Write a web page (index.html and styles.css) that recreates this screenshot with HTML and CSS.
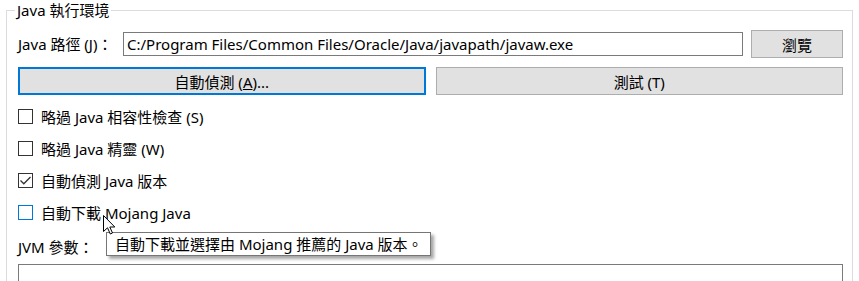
FILE: index.html
```html
<!DOCTYPE html>
<html lang="zh-Hant">
  <head>
    <meta charset="UTF-8" />
    <title>Java 執行環境</title>
    <link rel="stylesheet" href="styles.css">
  </head>
  <body>
    <fieldset class="group">
      <legend>Java 執行環境</legend>

      <div class="path-row">
        <label class="label path-label" for="javaPath">Java 路徑 (J)：</label>
        <input id="javaPath" class="textbox" type="text" value="C:/Program Files/Common Files/Oracle/Java/javapath/javaw.exe" />
        <button class="btn browse">瀏覽</button>
      </div>

      <div class="btn-row">
        <button class="btn focused">自動偵測 (<u>A</u>)...</button>
        <button class="btn">測試 (T)</button>
      </div>

      <div class="checks">
        <div class="check-row">
          <span class="box"></span>
          <span>略過 Java 相容性檢查 (S)</span>
        </div>
        <div class="check-row">
          <span class="box"></span>
          <span>略過 Java 精靈 (W)</span>
        </div>
        <div class="check-row">
          <span class="box">
            <svg width="13" height="13" viewBox="0 0 13 13">
              <path d="M1.5 6.5 L4.8 9.8 L11.5 3" fill="none" stroke="#333" stroke-width="1.3" />
            </svg>
          </span>
          <span>自動偵測 Java 版本</span>
        </div>
        <div class="check-row">
          <span class="box hover"></span>
          <span>自動下載 Mojang Java</span>
        </div>
      </div>

      <div class="label jvm">JVM 參數：</div>
      <div class="textarea"></div>
    </fieldset>

    <div class="tooltip">自動下載並選擇由 Mojang 推薦的 Java 版本。</div>

    <svg class="cursor" width="14" height="21" viewBox="0 0 14 21">
      <path d="M0.5 0.5 L0.5 16.5 L4.5 12.8 L7.3 19 L9.5 18 L6.8 12 L11.8 12 Z" fill="#fff" stroke="#000" stroke-width="1" stroke-linejoin="miter" />
    </svg>
  </body>
</html>
```

FILE: styles.css
```css
html,
body {
  margin: 0;
  padding: 0;
  background-color: #ffffff;
  height: 281px;
  overflow: hidden;
}

body {
  font-family: "Noto Sans", "Noto Sans CJK TC", sans-serif;
  font-size: 15px;
  color: #000000;
  position: relative;
}

.group {
  margin: 0 6px 0 6px;
  padding: 10px 9px 0 11px;
  border: 1px solid #dcdcdc;
  height: 300px;
  box-sizing: border-box;
}

.group legend {
  padding: 0 2px;
  margin-left: -3px;
  line-height: 20px;
}

.path-row {
  display: flex;
  align-items: center;
  height: 28px;
}

.label {
  line-height: 20px;
  white-space: nowrap;
}

.path-label {
  width: 105px;
  flex-shrink: 0;
}

.textbox {
  flex-grow: 1;
  height: 24px;
  box-sizing: border-box;
  margin: 0 8px 0 0;
  padding: 0 3px;
  border: 1px solid #7a7a7a;
  font: inherit;
  color: #000000;
  outline: none;
}

.btn {
  height: 28px;
  box-sizing: border-box;
  background-color: #e1e1e1;
  border: 1px solid #adadad;
  font: inherit;
  color: #000000;
  padding: 0;
}

.browse {
  width: 92px;
}

.btn-row {
  display: grid;
  grid-template-columns: 1fr 1fr;
  gap: 10px;
  margin-top: 9px;
}

.btn.focused {
  border: 2px solid #0078d7;
}

.checks {
  margin-top: 5px;
}

.check-row {
  display: flex;
  align-items: center;
  height: 32px;
  gap: 8px;
}

.box {
  width: 15px;
  height: 15px;
  box-sizing: border-box;
  border: 1px solid #333333;
  background-color: #ffffff;
  display: flex;
  align-items: center;
  justify-content: center;
}

.box.hover {
  border-color: #0078d7;
}

.jvm {
  margin-top: 9px;
}

.textarea {
  margin-top: 7px;
  height: 40px;
  border: 1px solid #7a7a7a;
}

.tooltip {
  position: absolute;
  left: 106px;
  top: 232px;
  width: 325px;
  height: 24px;
  box-sizing: border-box;
  padding-left: 8px;
  line-height: 22px;
  background-color: #ffffff;
  border: 1px solid #767676;
  box-shadow: 3px 3px 3px rgba(0, 0, 0, 0.35);
  white-space: nowrap;
}

.cursor {
  position: absolute;
  left: 103px;
  top: 215px;
}
```
